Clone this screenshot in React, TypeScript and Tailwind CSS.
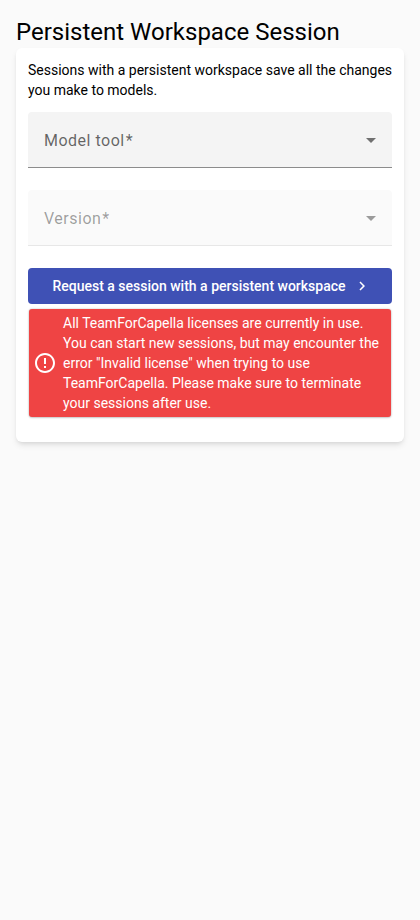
import React from "react";

function SelectField({ label, disabled = false }: { label: string; disabled?: boolean }) {
  return (
    <div
      className={
        disabled
          ? "flex h-14 items-center justify-between rounded-t border-b border-[#e7e7e7] bg-[#fafafa] px-4 pt-px text-black/38"
          : "flex h-14 items-center justify-between rounded-t border-b border-[#8c8c8c] bg-[#f4f4f4] px-4 pt-px text-black/60"
      }
    >
      <span className="mt-[2px] text-base leading-6 tracking-[0.5px]">
        {label}
        <span className="ml-px">*</span>
      </span>
      <svg className={disabled ? "h-[5px] w-[10px]" : "h-[5px] w-[10px] text-black/54"} viewBox="0 0 10 5" fill="currentColor">
        <path d="M0 0h10L5 5z" />
      </svg>
    </div>
  );
}

export default function App() {
  return (
    <main className="min-h-screen bg-[#fafafa] px-4 pt-4 font-['Roboto',sans-serif] text-black">
      <h1 className="text-2xl leading-8 font-normal">Persistent Workspace Session</h1>
      <section className="h-[394px] rounded-md bg-white p-3 text-sm leading-5 shadow-md">
        <p className="whitespace-nowrap">
          Sessions with a persistent workspace save all the changes
          <br />
          you make to models.
        </p>
        <div className="mt-3 flex flex-col gap-[22px]">
          <SelectField label="Model tool" />
          <SelectField label="Version" disabled />
          <button className="flex h-9 items-center justify-center gap-[7px] rounded bg-[#3f51b5] pl-[3px] font-medium text-white">
            Request a session with a persistent workspace
            <svg className="h-[18px] w-[18px]" viewBox="0 0 24 24" fill="currentColor">
              <path d="M10 6 8.59 7.41 13.17 12l-4.58 4.59L10 18l6-6z" />
            </svg>
          </button>
        </div>
        <div className="mx-px mt-[5px] flex items-center gap-1.5 rounded-[3px] bg-[#ef4444] px-1 py-1 text-white shadow-[0_0_2px_rgba(0,0,0,0.25),0_1px_2px_rgba(0,0,0,0.15)]">
          <svg className="h-6 w-6 shrink-0" viewBox="0 0 24 24" fill="currentColor">
            <path d="M11 15h2v2h-2zm0-8h2v6h-2zm.99-5C6.47 2 2 6.48 2 12s4.47 10 9.99 10C17.52 22 22 17.52 22 12S17.52 2 11.99 2zM12 20c-4.42 0-8-3.58-8-8s3.58-8 8-8 8 3.58 8 8-3.58 8-8 8z" />
          </svg>
          <p className="whitespace-nowrap">
            All TeamForCapella licenses are currently in use.
            <br />
            You can start new sessions, but may encounter the
            <br />
            error "Invalid license" when trying to use
            <br />
            TeamForCapella. Please make sure to terminate
            <br />
            your sessions after use.
          </p>
        </div>
      </section>
    </main>
  );
}
